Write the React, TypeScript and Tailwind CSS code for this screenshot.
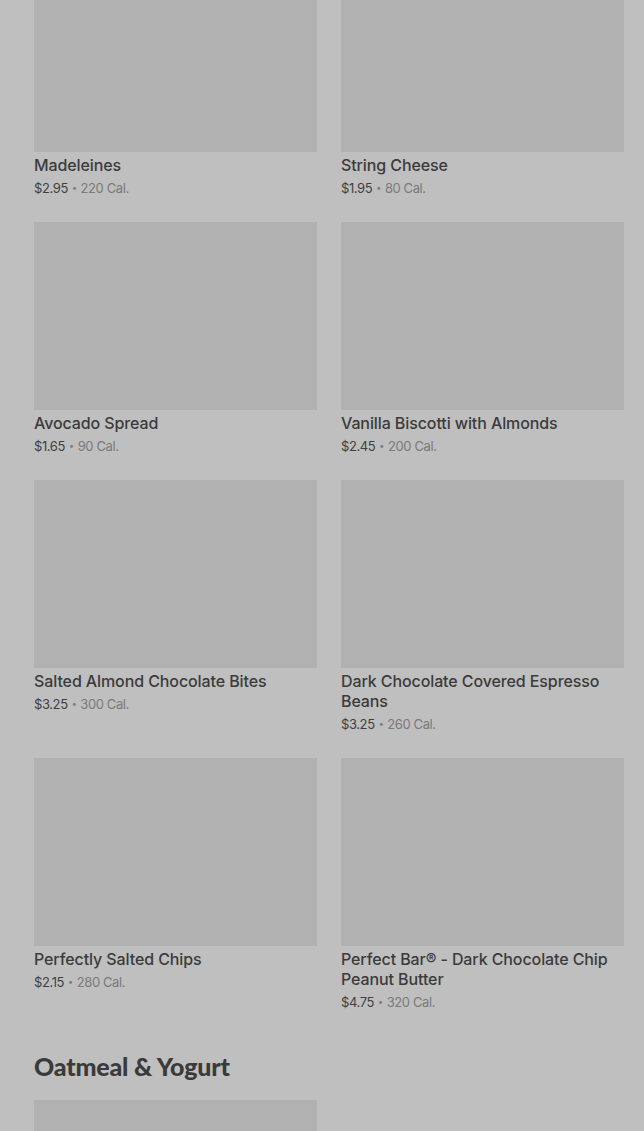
import React from 'react';

type Item = { name: string; price: string; cal: string };

const items: Item[] = [
  { name: 'Madeleines', price: '$2.95', cal: '220 Cal.' },
  { name: 'String Cheese', price: '$1.95', cal: '80 Cal.' },
  { name: 'Avocado Spread', price: '$1.65', cal: '90 Cal.' },
  { name: 'Vanilla Biscotti with Almonds', price: '$2.45', cal: '200 Cal.' },
  { name: 'Salted Almond Chocolate Bites', price: '$3.25', cal: '300 Cal.' },
  { name: 'Dark Chocolate Covered Espresso Beans', price: '$3.25', cal: '260 Cal.' },
  { name: 'Perfectly Salted Chips', price: '$2.15', cal: '280 Cal.' },
  { name: 'Perfect Bar® - Dark Chocolate Chip Peanut Butter', price: '$4.75', cal: '320 Cal.' },
];

function ProductCard({ item }: { item: Item }) {
  return (
    <div className="pb-6">
      <div className="h-[188px] w-full bg-[#b1b1b1]" />
      <h3 className="mt-[3px] text-[16px] leading-[20px] font-medium text-[#3b3b3b] tracking-[-0.1px]">
        {item.name}
      </h3>
      <p className="mt-[3px] flex h-[20px] items-center text-[13px] leading-[20px] tracking-[-0.4px]">
        <span className="text-[#3f3f3f]">{item.price}</span>
        <span className="mx-[4px] text-[9px] leading-[20px] text-[#7a7a7a]">•</span>
        <span className="text-[#7a7a7a]">{item.cal}</span>
      </p>
    </div>
  );
}

export default function App() {
  return (
    <div className="min-h-[1131px] bg-[#bfbfbf] overflow-hidden" style={{ fontFamily: 'Inter, "Liberation Sans", sans-serif' }}>
      <div className="-mt-[36px] pl-[34px] pr-[20px]">
        <div className="grid grid-cols-2 gap-x-6">
          {items.map((item) => (
            <ProductCard key={item.name} item={item} />
          ))}
        </div>

        <h2
          className="pt-[14px] pb-[18px] text-[25px] leading-[32px] font-black text-[#3a3a3a] tracking-[-0.2px]"
          style={{ fontFamily: 'Lato, "Liberation Sans", sans-serif' }}
        >
          Oatmeal &amp; Yogurt
        </h2>

        <div className="grid grid-cols-2 gap-x-6">
          <div className="h-[188px] bg-[#b1b1b1]" />
        </div>
      </div>
    </div>
  );
}
